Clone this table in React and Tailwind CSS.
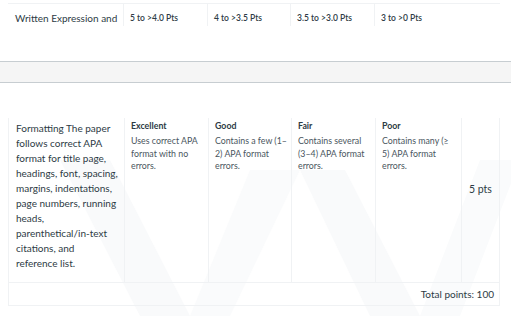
import React from "react";

const ratingsTop = ["5 to >4.0 Pts", "4 to >3.5 Pts", "3.5 to >3.0 Pts", "3 to >0 Pts"];
const ratings = [
  { t: "Excellent", d: "Uses correct APA format with no errors." },
  { t: "Good", d: "Contains a few (1–2) APA format errors." },
  { t: "Fair", d: "Contains several (3–4) APA format errors." },
  { t: "Poor", d: "Contains many (≥ 5) APA format errors." },
];

export default function App() {
  return (
    <div
      className="relative w-[511px] h-[316px] overflow-hidden bg-white text-[#2d3b45]"
      style={{ fontFamily: "Lato, 'Open Sans', sans-serif" }}
    >
      <svg className="absolute inset-0 pointer-events-none" width="511" height="316" viewBox="0 0 511 316">
        <polygon points="60,160 110,160 190,316 140,316" fill="#f9fafb" />
        <polygon points="250,170 300,170 230,316 190,316" fill="#fafbfc" />
        <polygon points="300,170 345,170 420,316 370,316" fill="#f9fafb" />
        <polygon points="480,160 520,160 460,316 420,316" fill="#fafbfc" />
      </svg>

      <div className="relative">
        {/* top row */}
        <div className="mx-[8px] w-[492px] mt-[3px] border-t border-[#f0f2f4] grid grid-cols-[115px_84px_83px_84px_86px_40px] h-[22px]">
          <div className="pl-[7px] pt-[7px] text-[10px] leading-[15px] whitespace-nowrap">Written Expression and</div>
          {ratingsTop.map((r, i) => (
            <div key={i} className="border-l border-[#f0f2f4] pl-[6px] pt-[8px] text-[8.5px] leading-[12px] font-semibold whitespace-nowrap">
              {r}
            </div>
          ))}
          <div />
        </div>

        {/* gray band */}
        <div className="mt-[36px] h-[22px] border-y border-[#c7cdd1] bg-[#f5f5f5]" />

        {/* lower table */}
        <div className="mx-[8px] w-[492px] mt-[35px] border-x border-b border-[#f0f2f4]">
          <div className="grid grid-cols-[115px_84px_83px_84px_86px_40px] h-[164px]">
            <div className="pl-[7px] pr-[3px] pt-[3px] text-[10px] leading-[15px]">
              Formatting The paper follows correct APA format for title page, headings, font, spacing, margins, indentations, page numbers, running heads,{" "}
              <span className="whitespace-nowrap">parenthetical/in-text</span> citations, and{" "}
              <span className="whitespace-nowrap">reference list.</span>
            </div>
            {ratings.map((r, i) => (
              <div key={i} className="border-l border-[#f0f2f4] pl-[6px] pr-[4px] pt-[2px]">
                <div className="text-[8.8px] leading-[12px] font-bold">{r.t}</div>
                <div className="mt-[3px] text-[8.8px] leading-[12.5px] text-[#4a5660]">{r.d}</div>
              </div>
            ))}
            <div className="border-l border-[#f0f2f4] pl-[7px] pt-[64px] text-[10.5px] leading-[15px] whitespace-nowrap">
              5 pts
            </div>
          </div>
          <div className="border-t border-[#f0f2f4] h-[23px] flex items-center justify-end pr-[5px] text-[10px]">
            Total points: 100
          </div>
        </div>
      </div>
    </div>
  );
}
